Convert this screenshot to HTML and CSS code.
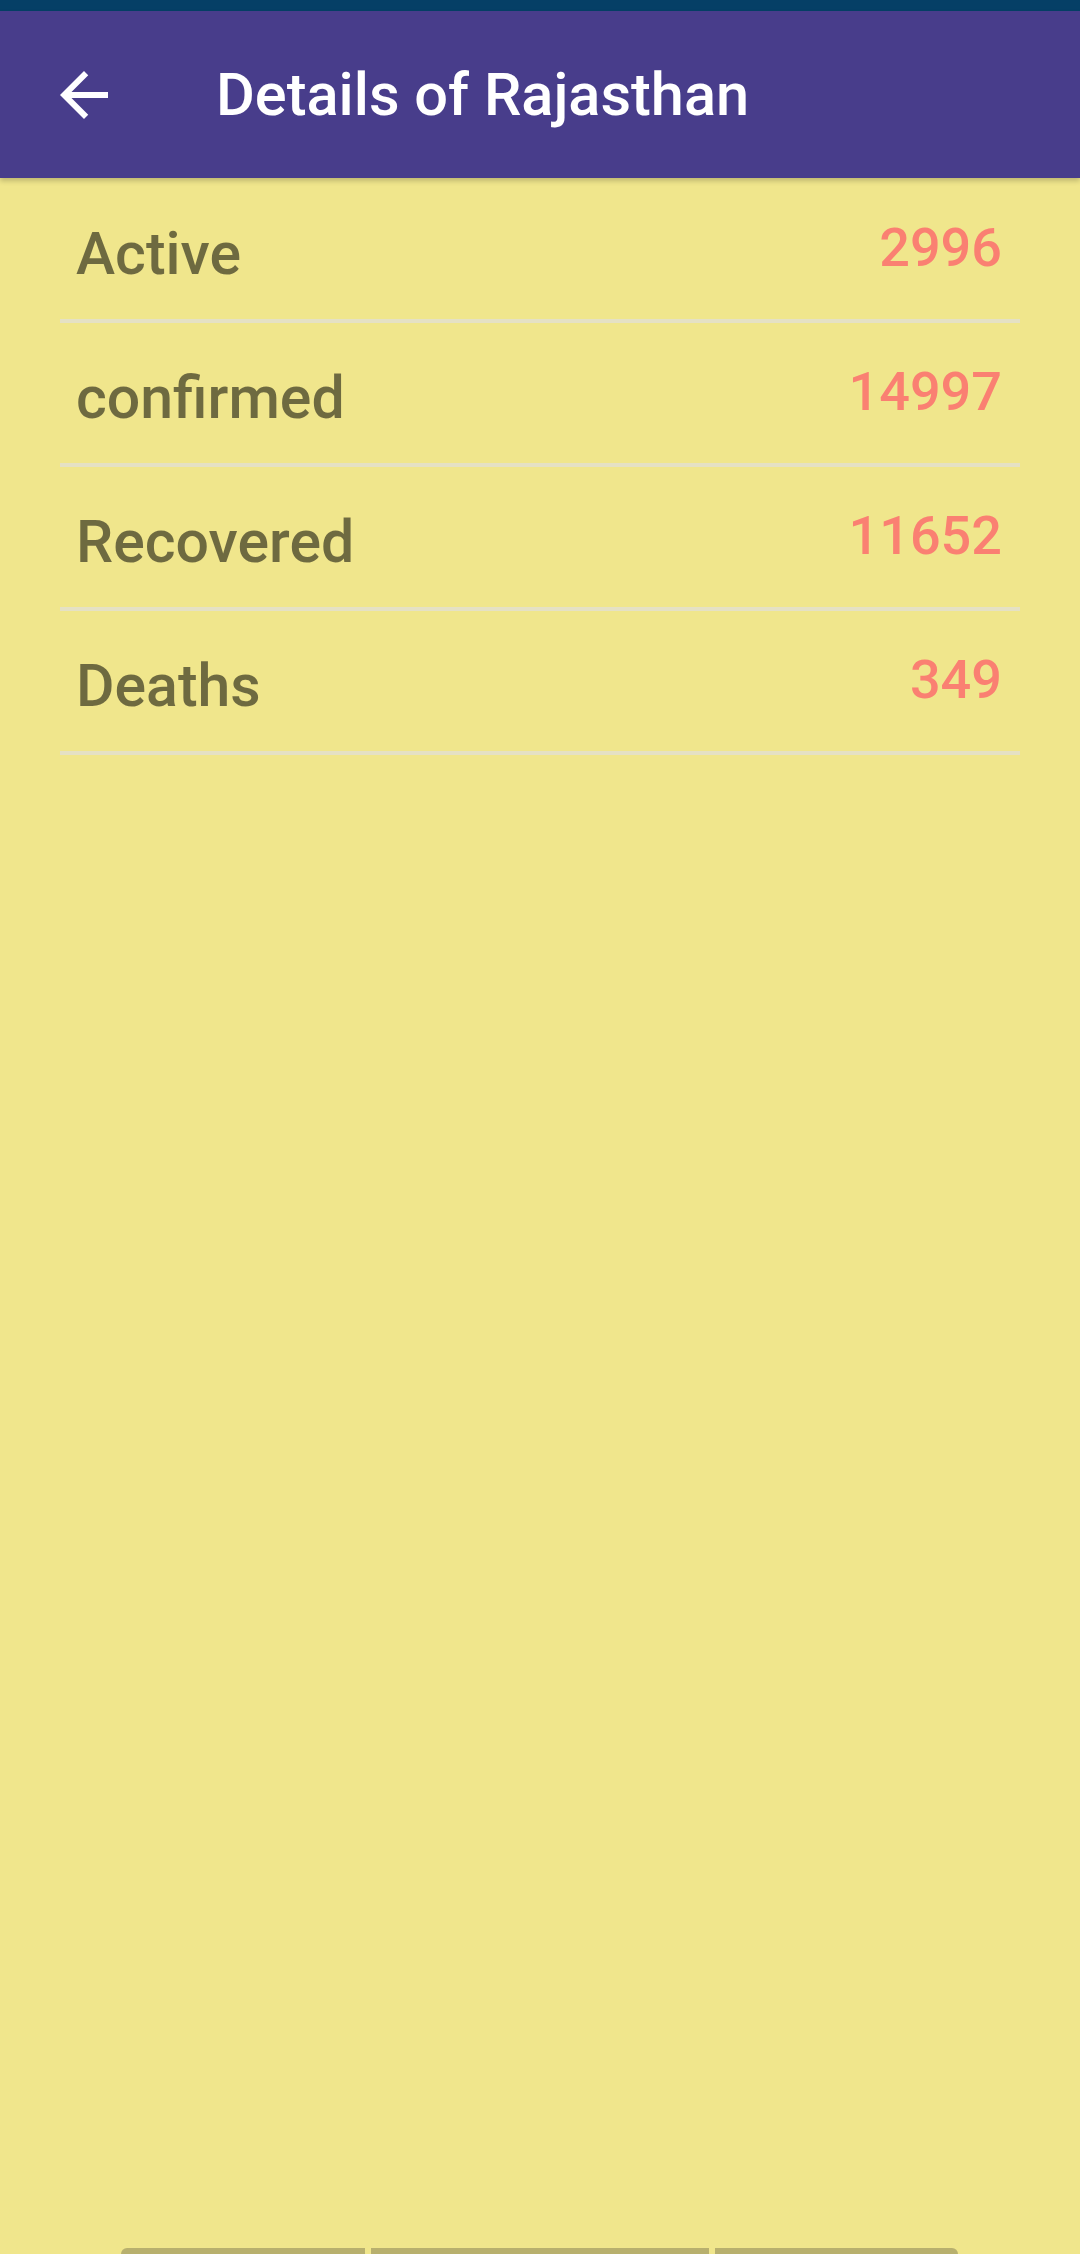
FILE: index.html
```html
<!DOCTYPE html>
<html>
<head>
<meta charset="utf-8">
<link rel="stylesheet" href="styles.css">
</head>
<body>
<div class="screen">
  <div class="statusbar"></div>
  <header class="appbar">
    <svg class="back" viewBox="0 0 24 24" width="72" height="72"><path fill="#fff" d="M20 11H7.83l5.59-5.59L12 4l-8 8 8 8 1.41-1.41L7.83 13H20v-2z"/></svg>
    <h1 class="title">Details of Rajasthan</h1>
  </header>
  <main class="list">
    <div class="row"><span class="label">Active</span><span class="value">2996</span></div>
    <div class="row"><span class="label">confirmed</span><span class="value">14997</span></div>
    <div class="row"><span class="label">Recovered</span><span class="value">11652</span></div>
    <div class="row"><span class="label">Deaths</span><span class="value">349</span></div>
  </main>
  <div class="bottom">
    <div class="seg seg-a"></div>
    <div class="seg seg-b"></div>
    <div class="seg seg-c"></div>
  </div>
</div>
</body>
</html>
```
FILE: styles.css
```css
html, body {
  margin: 0;
  padding: 0;
}
body {
  background: #F0E68C;
  font-family: Roboto, "Noto Sans", sans-serif;
}
.screen {
  width: 1080px;
  height: 2254px;
  display: flex;
  flex-direction: column;
  overflow: hidden;
}
.statusbar {
  height: 11px;
  background: #053f66;
  flex: none;
}
.appbar {
  height: 167px;
  flex: none;
  background: #483D8B;
  display: flex;
  align-items: center;
  box-shadow: 0 3px 5px rgba(0,0,0,0.2);
  position: relative;
  z-index: 1;
}
.back {
  margin-left: 48px;
  flex: none;
}
.title {
  margin: 0 0 0 96px;
  color: #fff;
  font-size: 59.5px;
  font-weight: 500;
  line-height: 1;
  padding-top: 2px;
}
.list {
  padding: 1px 60px 0 60px;
}
.row {
  height: 140px;
  border-bottom: 4px solid #e5e1c4;
  display: flex;
  justify-content: space-between;
  align-items: flex-start;
  padding: 0 18px 0 16px;
}
.label {
  font-size: 59px;
  font-weight: 500;
  line-height: 1;
  color: rgba(0,0,0,0.54);
  padding-top: 45px;
}
.value {
  font-size: 54px;
  font-weight: 500;
  line-height: 1;
  color: #FA8072;
  padding-top: 42px;
}
.bottom {
  margin-top: auto;
  height: 6px;
  display: flex;
  gap: 6px;
  padding-left: 121px;
}
.seg {
  background: #b8b06e;
  height: 6px;
}
.seg-a { width: 244px; border-top-left-radius: 6px; }
.seg-b { width: 338px; }
.seg-c { width: 243px; border-top-right-radius: 6px; }
```
